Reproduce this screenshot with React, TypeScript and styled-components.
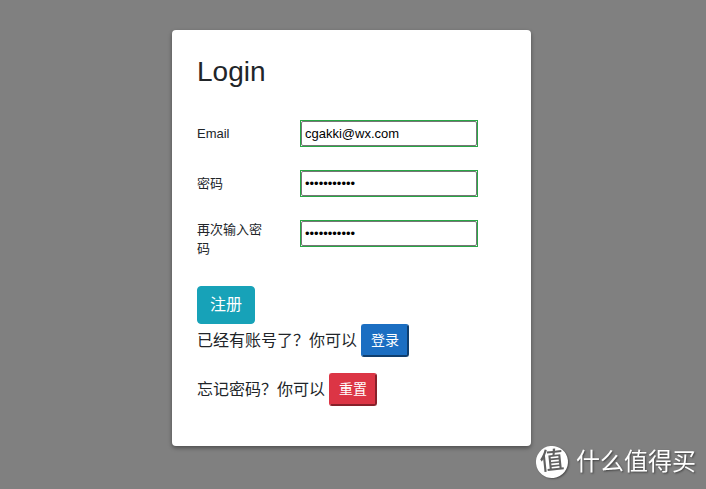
import React from "react";
import styled, { createGlobalStyle } from "styled-components";

const GlobalStyle = createGlobalStyle`
  *, *::before, *::after { box-sizing: border-box; }
  body {
    margin: 0;
    min-height: 100vh;
    background: #808080;
    color: #212529;
    font-family: "Liberation Sans", "Noto Sans CJK SC", sans-serif;
    font-size: 16px;
    line-height: 24px;
  }
`;

const Page = styled.main`
  display: flex;
  justify-content: center;
  min-height: 100vh;
  padding: 30px 3px 42px 0;
`;

const Card = styled.form`
  width: 100%;
  max-width: 359px;
  padding: 24px 25px;
  align-self: flex-start;
  background: #fff;
  border-radius: 4px;
  box-shadow: 0 2px 4px rgba(0, 0, 0, 0.4);
`;

const Title = styled.h1`
  margin: 0 0 30px;
  font-size: 28px;
  font-weight: 400;
  line-height: 36px;
`;

const Fields = styled.div`
  display: grid;
  row-gap: 23px;
`;

const Field = styled.div`
  display: grid;
  grid-template-columns: 72px 178px;
  column-gap: 31px;
  align-items: start;
`;

const Label = styled.label`
  display: flex;
  align-items: center;
  min-height: 27px;
  font-size: 13px;
  line-height: 19px;
`;

const ValidFrame = styled.div`
  display: flex;
  border: 1px solid #28a745;
  background: #fff;
`;

const Input = styled.input`
  width: 100%;
  height: 25px;
  padding: 0 3px;
  border: 1px solid #767676;
  border-radius: 2px;
  background: #fff;
  color: #000;
  font-family: "Liberation Sans", sans-serif;
  font-size: 13px;
`;

const SubmitButton = styled.button`
  display: block;
  height: 38px;
  margin-top: 28px;
  padding: 0 12px;
  border: 1px solid #17a2b8;
  border-radius: 4px;
  background: #17a2b8;
  color: #fff;
  font: inherit;
`;

const Prompt = styled.p`
  display: flex;
  align-items: center;
  gap: 4px;
  margin: 0 0 16px;
`;

const SmallButton = styled.button<{ $color: string }>`
  height: 33px;
  padding: 0 8px 3px;
  border: 2px outset ${(p) => p.$color};
  border-radius: 3px;
  background: ${(p) => p.$color};
  color: #fff;
  font-family: inherit;
  font-size: 14px;
`;

const Brand = styled.div`
  position: fixed;
  right: 10px;
  bottom: 11px;
  display: flex;
  align-items: center;
  gap: 8px;
  color: #fff;
  font-size: 24px;
  line-height: 32px;
  text-shadow: 1px 1px 2px rgba(0, 0, 0, 0.5);
`;

const BrandMark = styled.span`
  width: 32px;
  height: 32px;
  border-radius: 50%;
  background: #fff;
  color: #606060;
  font-size: 24px;
  font-weight: 500;
  line-height: 30px;
  text-align: center;
  text-shadow: none;
  transform: rotate(-6deg);
  box-shadow: 1px 1px 2px rgba(0, 0, 0, 0.4);
`;

const fields = [
  { id: "email", label: "Email", type: "email", value: "cgakki@wx.com" },
  { id: "password", label: "密码", type: "password", value: "password123" },
  { id: "confirm", label: "再次输入密码", type: "password", value: "password123" },
];

export default function App() {
  return (
    <>
      <GlobalStyle />
      <Page>
        <Card>
          <Title>Login</Title>
          <Fields>
            {fields.map((f) => (
              <Field key={f.id}>
                <Label htmlFor={f.id}>{f.label}</Label>
                <ValidFrame>
                  <Input id={f.id} type={f.type} defaultValue={f.value} />
                </ValidFrame>
              </Field>
            ))}
          </Fields>
          <SubmitButton type="submit">注册</SubmitButton>
          <Prompt>
            已经有账号了？你可以
            <SmallButton type="button" $color="#1b6ec2">登录</SmallButton>
          </Prompt>
          <Prompt>
            忘记密码？你可以
            <SmallButton type="button" $color="#dc3545">重置</SmallButton>
          </Prompt>
        </Card>
      </Page>
      <Brand>
        <BrandMark>值</BrandMark>
        <span>什么值得买</span>
      </Brand>
    </>
  );
}
